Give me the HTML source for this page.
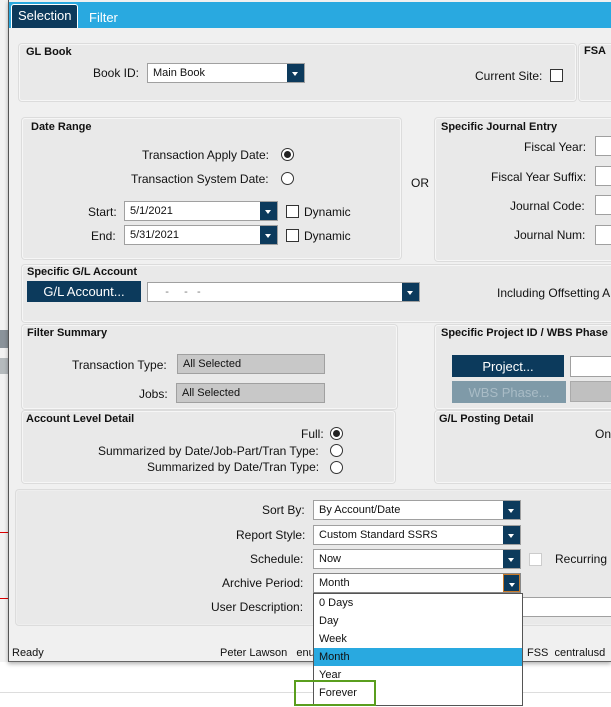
<!DOCTYPE html>
<html><head><meta charset="utf-8"><style>
*{box-sizing:border-box;margin:0;padding:0}
body{width:611px;height:707px;overflow:hidden;background:#fff;font-family:"Liberation Sans",Arial,sans-serif;font-size:12px;color:#111;position:relative}
.a{position:absolute}
.p{position:absolute;background:#e9e9e9;border:1px solid #f6f6f6;border-radius:3px;box-shadow:0 0 0 1px #dcdcdc}
.h{position:absolute;font-weight:bold;font-size:11px}
.l{position:absolute;text-align:right;white-space:nowrap}
.in{position:absolute;background:#fff;border:1px solid #a0a0a0;height:20px;padding:3px 5px;font-size:11px;white-space:nowrap}
.dd{position:absolute;right:0;top:0;bottom:0;width:17px;background:#0c3a5c}
.dd:after{content:"";position:absolute;left:5px;top:8px;border-left:3px solid transparent;border-right:3px solid transparent;border-top:4px solid #fff}
.rad{position:absolute;width:13px;height:13px;border:1px solid #333;border-radius:50%;background:#fff}
.rad.on:after{content:"";position:absolute;left:2px;top:2px;width:7px;height:7px;border-radius:50%;background:#222}
.cb{position:absolute;width:13px;height:13px;border:1px solid #333;background:#fff}
.btn{position:absolute;background:#0c3a5c;color:#fff;text-align:center;font-size:13px}
</style></head><body>
<div class="a" style="left:0;top:0;width:9px;height:662px;background:#f2f2f2"></div>
<div class="a" style="left:0;top:330px;width:8px;height:18px;background:#8a939a"></div>
<div class="a" style="left:0;top:358px;width:8px;height:16px;background:#b5babd"></div>
<div class="a" style="left:0;top:532px;width:8px;height:1px;background:#d00"></div>
<div class="a" style="left:0;top:598px;width:8px;height:1px;background:#d00"></div>
<div class="a" style="left:0;top:692px;width:611px;height:1px;background:#ddd"></div>
<div class="a" style="left:8px;top:0;width:603px;height:662px;background:#f0f0f0;border-left:1px solid #555;border-bottom:1px solid #666;box-shadow:0 2px 4px rgba(0,0,0,.3)"></div>
<div class="a" style="left:9px;top:2px;width:602px;height:26px;background:#29a9e0"></div>
<div class="a" style="left:11px;top:4px;width:67px;height:24px;background:#0c3a5c;border:1px solid #fff;border-bottom:none;border-radius:3px 3px 0 0;color:#fff;font-size:13px;padding:3px 0 0 6px">Selection</div>
<div class="a" style="left:89px;top:10px;color:#fff;font-size:13px">Filter</div>

<div class="p" style="left:19px;top:44px;width:557px;height:57px"></div>
<div class="h" style="left:26px;top:46px">GL Book</div>
<div class="l" style="left:93px;top:66px">Book ID:</div>
<div class="in" style="left:147px;top:63px;width:158px">Main Book<div class="dd"></div></div>
<div class="l" style="left:475px;top:69px">Current Site:</div>
<div class="cb" style="left:550px;top:69px"></div>
<div class="p" style="left:579px;top:44px;width:40px;height:57px"></div>
<div class="h" style="left:584px;top:45px">FSA</div>

<div class="p" style="left:22px;top:118px;width:379px;height:141px"></div>
<div class="h" style="left:31px;top:121px">Date Range</div>
<div class="l" style="left:142px;top:148px">Transaction Apply Date:</div>
<div class="rad on" style="left:281px;top:148px"></div>
<div class="l" style="left:131px;top:172px">Transaction System Date:</div>
<div class="rad" style="left:281px;top:172px"></div>
<div class="l" style="left:88px;top:205px">Start:</div>
<div class="in" style="left:124px;top:201px;width:154px">5/1/2021<div class="dd"></div></div>
<div class="cb" style="left:286px;top:205px"></div>
<div class="l" style="left:304px;top:205px">Dynamic</div>
<div class="l" style="left:91px;top:229px">End:</div>
<div class="in" style="left:124px;top:225px;width:154px">5/31/2021<div class="dd"></div></div>
<div class="cb" style="left:286px;top:229px"></div>
<div class="l" style="left:304px;top:229px">Dynamic</div>
<div class="l" style="left:411px;top:176px">OR</div>

<div class="p" style="left:435px;top:118px;width:180px;height:143px"></div>
<div class="h" style="left:441px;top:121px">Specific Journal Entry</div>
<div class="l" style="left:524px;top:140px">Fiscal Year:</div>
<div class="in" style="left:595px;top:136px;width:30px"></div>
<div class="l" style="left:491px;top:170px">Fiscal Year Suffix:</div>
<div class="in" style="left:595px;top:166px;width:30px"></div>
<div class="l" style="left:510px;top:199px">Journal Code:</div>
<div class="in" style="left:595px;top:195px;width:30px"></div>
<div class="l" style="left:514px;top:228px">Journal Num:</div>
<div class="in" style="left:595px;top:225px;width:30px"></div>

<div class="p" style="left:22px;top:265px;width:600px;height:57px"></div>
<div class="h" style="left:27px;top:266px">Specific G/L Account</div>
<div class="btn" style="left:27px;top:281px;width:114px;height:21px;padding-top:3px">G/L Account...</div>
<div class="in" style="left:147px;top:282px;width:273px;color:#777">&nbsp;&nbsp;&nbsp;&nbsp;-&nbsp;&nbsp;&nbsp;&nbsp;&nbsp;-&nbsp;&nbsp;&nbsp;-<div class="dd"></div></div>
<div class="l" style="left:497px;top:286px">Including Offsetting A</div>

<div class="p" style="left:22px;top:325px;width:375px;height:84px"></div>
<div class="h" style="left:27px;top:327px">Filter Summary</div>
<div class="l" style="left:72px;top:358px">Transaction Type:</div>
<div class="in" style="left:177px;top:354px;width:148px;background:#c8c8c8">All Selected</div>
<div class="l" style="left:139px;top:387px">Jobs:</div>
<div class="in" style="left:176px;top:383px;width:149px;background:#c8c8c8">All Selected</div>

<div class="p" style="left:435px;top:325px;width:180px;height:84px"></div>
<div class="h" style="left:441px;top:327px">Specific Project ID / WBS Phase</div>
<div class="btn" style="left:452px;top:355px;width:112px;height:22px;padding-top:4px">Project...</div>
<div class="in" style="left:570px;top:356px;width:50px;height:21px"></div>
<div class="btn" style="left:452px;top:381px;width:114px;height:22px;padding-top:4px;background:#7f9aa8;color:#a9bcc6">WBS Phase...</div>
<div class="in" style="left:570px;top:381px;width:50px;height:21px;background:#c0c0c0;border-color:#aaa"></div>

<div class="p" style="left:22px;top:411px;width:373px;height:72px"></div>
<div class="h" style="left:26px;top:413px">Account Level Detail</div>
<div class="l" style="left:301px;top:427px">Full:</div>
<div class="rad on" style="left:330px;top:427px"></div>
<div class="l" style="left:98px;top:444px">Summarized by Date/Job-Part/Tran Type:</div>
<div class="rad" style="left:330px;top:444px"></div>
<div class="l" style="left:147px;top:460px">Summarized by Date/Tran Type:</div>
<div class="rad" style="left:330px;top:461px"></div>

<div class="p" style="left:435px;top:411px;width:180px;height:72px"></div>
<div class="h" style="left:439px;top:413px">G/L Posting Detail</div>
<div class="l" style="left:595px;top:427px">On</div>

<div class="p" style="left:16px;top:490px;width:600px;height:135px;border-color:#eee"></div>
<div class="l" style="left:262px;top:503px">Sort By:</div>
<div class="in" style="left:313px;top:500px;width:208px">By Account/Date<div class="dd"></div></div>
<div class="l" style="left:236px;top:528px">Report Style:</div>
<div class="in" style="left:313px;top:525px;width:208px">Custom Standard SSRS<div class="dd"></div></div>
<div class="l" style="left:250px;top:552px">Schedule:</div>
<div class="in" style="left:313px;top:549px;width:208px">Now<div class="dd"></div></div>
<div class="cb" style="left:529px;top:553px;border-color:#ccc"></div>
<div class="l" style="left:555px;top:552px">Recurring</div>
<div class="l" style="left:222px;top:576px">Archive Period:</div>
<div class="in" style="left:313px;top:573px;width:208px;border-color:#888">Month<div class="dd" style="border:1px solid #c87a2a"></div></div>
<div class="l" style="left:211px;top:600px">User Description:</div>
<div class="in" style="left:500px;top:597px;width:120px"></div>

<div class="a" style="left:9px;top:642px;width:602px;height:19px;background:#f0f0f0;font-size:11px">
<span class="a" style="left:3px;top:5px">Ready</span>
<span class="a" style="left:211px;top:5px;white-space:nowrap">Peter Lawson&nbsp;&nbsp;&nbsp;enu</span>
<span class="a" style="left:518px;top:5px;white-space:nowrap">FSS&nbsp;&nbsp;centralusd</span>
</div>

<div class="a" style="left:313px;top:593px;width:210px;height:113px;background:#fff;border:1px solid #555;font-size:11px">
<div style="height:18px;padding:3px 5px">0 Days</div>
<div style="height:18px;padding:3px 5px">Day</div>
<div style="height:18px;padding:3px 5px">Week</div>
<div style="height:18px;padding:3px 5px;background:#29a9e0">Month</div>
<div style="height:18px;padding:3px 5px">Year</div>
<div style="height:18px;padding:3px 5px">Forever</div>
</div>
<div class="a" style="left:294px;top:680px;width:82px;height:26px;border:2px solid #5a9e1e"></div>
</body></html>
